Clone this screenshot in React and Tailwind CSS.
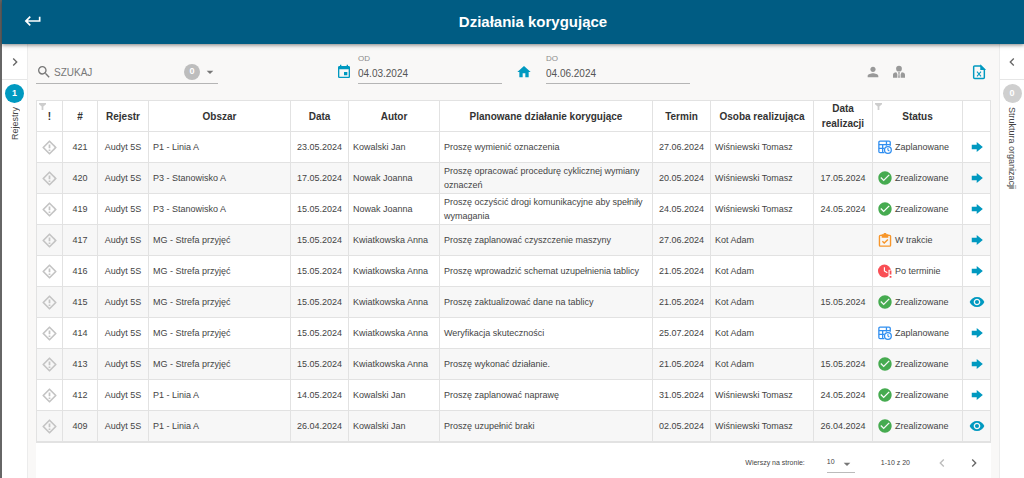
import { useState } from "react";
import {
  MdArrowDropDown,
  MdCheckCircle,
  MdChevronLeft,
  MdChevronRight,
  MdEvent,
  MdHome,
  MdKeyboardReturn,
  MdPerson,
  MdSearch,
  MdVisibility,
} from "react-icons/md";

const PLANNED = "Zaplanowane";
const DONE = "Zrealizowane";
const ACTIVE = "W trakcie";
const LATE = "Po terminie";

const rows = [
  { id: 421, area: "P1 - Linia A", date: "23.05.2024", author: "Kowalski Jan", action: "Proszę wymienić oznaczenia", due: "27.06.2024", person: "Wiśniewski Tomasz", done: "", status: PLANNED },
  { id: 420, area: "P3 - Stanowisko A", date: "17.05.2024", author: "Nowak Joanna", action: "Proszę opracować procedurę cyklicznej wymiany oznaczeń", due: "20.05.2024", person: "Wiśniewski Tomasz", done: "17.05.2024", status: DONE },
  { id: 419, area: "P3 - Stanowisko A", date: "15.05.2024", author: "Nowak Joanna", action: "Proszę oczyścić drogi komunikacyjne aby spełniły wymagania", due: "24.05.2024", person: "Wiśniewski Tomasz", done: "24.05.2024", status: DONE },
  { id: 417, area: "MG - Strefa przyjęć", date: "15.05.2024", author: "Kwiatkowska Anna", action: "Proszę zaplanować czyszczenie maszyny", due: "27.06.2024", person: "Kot Adam", done: "", status: ACTIVE },
  { id: 416, area: "MG - Strefa przyjęć", date: "15.05.2024", author: "Kwiatkowska Anna", action: "Proszę wprowadzić schemat uzupełnienia tablicy", due: "21.05.2024", person: "Kot Adam", done: "", status: LATE },
  { id: 415, area: "MG - Strefa przyjęć", date: "15.05.2024", author: "Kwiatkowska Anna", action: "Proszę zaktualizować dane na tablicy", due: "21.05.2024", person: "Kot Adam", done: "15.05.2024", status: DONE, closed: true },
  { id: 414, area: "MG - Strefa przyjęć", date: "15.05.2024", author: "Kwiatkowska Anna", action: "Weryfikacja skuteczności", due: "25.07.2024", person: "Kot Adam", done: "", status: PLANNED },
  { id: 413, area: "MG - Strefa przyjęć", date: "15.05.2024", author: "Kwiatkowska Anna", action: "Proszę wykonać działanie.", due: "21.05.2024", person: "Kot Adam", done: "15.05.2024", status: DONE },
  { id: 412, area: "P1 - Linia A", date: "14.05.2024", author: "Kowalski Jan", action: "Proszę zaplanować naprawę", due: "31.05.2024", person: "Wiśniewski Tomasz", done: "24.05.2024", status: DONE },
  { id: 409, area: "P1 - Linia A", date: "26.04.2024", author: "Kowalski Jan", action: "Proszę uzupełnić braki", due: "02.05.2024", person: "Wiśniewski Tomasz", done: "26.04.2024", status: DONE, closed: true },
];

const columns = [
  { label: "!", width: "w-[26px]", filter: true },
  { label: "#", width: "w-[35px]" },
  { label: "Rejestr", width: "w-[51px]" },
  { label: "Obszar", width: "w-[142px]" },
  { label: "Data", width: "w-[58px]" },
  { label: "Autor", width: "w-[91px]" },
  { label: "Planowane działanie korygujące", width: "" },
  { label: "Termin", width: "w-[58px]" },
  { label: "Osoba realizująca", width: "w-[103px]" },
  { label: "Data realizacji", width: "w-[59px]" },
  { label: "Status", width: "w-[90px]", filter: true },
  { label: "", width: "w-[28px]" },
];

function PriorityIcon() {
  return (
    <svg viewBox="0 0 24 24" className="mx-auto size-[15px] text-[#c4c4c4]" fill="none" stroke="currentColor" strokeWidth="2.800">
      <path d="M12 2 22 12 12 22 2 12Z" strokeLinejoin="round" />
      <path d="M12 7v6M12 15v2.400" />
    </svg>
  );
}

function FilterIcon() {
  return (
    <svg viewBox="0 0 12 12" className="absolute top-0.5 left-0.5 size-[7px] text-[#cdcdcd]" fill="currentColor">
      <path d="M0 0h12v2L7.500 6v6h-3V6L0 2Z" />
    </svg>
  );
}

function ManagerIcon() {
  return (
    <svg viewBox="0 0 24 24" className="size-4" fill="currentColor">
      <circle cx="12" cy="7" r="4.300" />
      <path d="M3 20.500v-4.500c0-1.800 2-3 5-3.500l1.500 3v5ZM21 20.500v-4.500c0-1.800-2-3-5-3.500l-1.500 3v5ZM10.500 12.500h3L12.700 15l.6 5.500h-2.600l.6-5.500Z" />
    </svg>
  );
}

function ExcelIcon() {
  return (
    <svg viewBox="0 0 24 24" className="size-4" fill="none" stroke="currentColor" strokeWidth="2.200">
      <path d="M14.500 3H5.500C4.500 3 4 3.500 4 4.300v16c0 .9.500 1.500 1.500 1.500h13c1 0 1.500-.6 1.500-1.500V8.500Z" />
      <path d="M15 3v5h5Z" fill="currentColor" />
      <path d="m9 11.500 6 7M15 11.500l-6 7" strokeWidth="1.600" />
    </svg>
  );
}

function ArrowIcon() {
  return (
    <svg viewBox="0 0 24 24" className="size-[14px]" fill="currentColor">
      <path d="M3 8h8.500V3.500l10.500 8.500-10.500 8.500V16H3Z" />
    </svg>
  );
}

function StatusIcon({ status }) {
  if (status === DONE) return <MdCheckCircle className="size-4 shrink-0 text-[#46ab50]" />;
  if (status === PLANNED) {
    return (
      <svg viewBox="0 0 24 24" className="size-[14px] shrink-0 text-[#2f8ef0]" fill="none" stroke="currentColor" strokeWidth="2.200">
        <path d="M11 21.500H3.500a2 2 0 0 1-2-2V4a2 2 0 0 1 2-2H19a2 2 0 0 1 2 2v6" />
        <path d="M1.500 8h19.500M1.500 14.500h9M8 8v13M14.500 2v8" />
        <circle cx="17" cy="17" r="5.800" fill="white" />
        <path d="M17 13.500V17l2.500 2" strokeWidth="1.800" />
      </svg>
    );
  }
  if (status === ACTIVE) {
    return (
      <svg viewBox="0 0 24 24" className="size-[14px] shrink-0 text-[#f7962b]" fill="none" stroke="currentColor" strokeWidth="2.400">
        <rect x="2.500" y="4" width="19" height="18.500" rx="1.500" />
        <path d="M7.500 3.500h9V7h-9Z" fill="currentColor" />
        <circle cx="12" cy="2.500" r="1.500" fill="currentColor" />
        <path d="m7.500 14 3.200 3.200L17 11" />
      </svg>
    );
  }
  return (
    <svg viewBox="0 0 24 24" className="size-[14px] shrink-0" fill="none">
      <circle cx="11" cy="12" r="11" fill="#f94f55" />
      <path d="M11 5.500V12l5 3" stroke="white" strokeWidth="2" />
      <path d="M18 10h6v14h-6Z" fill="white" />
      <path d="M21.500 11v7M21.500 20.500V23.500" stroke="#f94f55" strokeWidth="3" />
    </svg>
  );
}

function SidePanel({ label, count, open, className, badge, turn }) {
  return (
    <aside className={`flex shrink-0 flex-col items-center bg-white ${className}`}>
      <button aria-label={`Rozwiń: ${label}`} className="flex h-9 w-full items-center justify-center border-b border-[#e6e6e6] text-[#666]">
        {open}
      </button>
      <span className={`mt-1 flex size-[19px] items-center justify-center rounded-full text-[9px] font-bold text-white ${badge}`}>{count}</span>
      <span className={`mt-1 text-[9px] leading-3 whitespace-nowrap text-[#444] [writing-mode:vertical-rl] ${turn}`}>{label}</span>
    </aside>
  );
}

function DateField({ id, label, value, onChange }) {
  return (
    <div className="flex w-[144px] flex-col border-b border-[#b5b5b5]">
      <label htmlFor={id} className="text-[8px] leading-[8px] text-[#8b8b8b]">{label}</label>
      <input
        id={id}
        value={value}
        onChange={(e) => onChange(e.target.value)}
        className="h-5 w-full bg-transparent text-[10px] text-[#555] outline-none"
      />
    </div>
  );
}

export default function App() {
  const [search, setSearch] = useState("");
  const [from, setFrom] = useState("04.03.2024");
  const [to, setTo] = useState("04.06.2024");

  return (
    <div className="flex min-h-screen flex-col border-l-2 border-[#666] bg-[#f9f8f7] font-['Liberation_Sans',Arial,sans-serif] text-[#444]">
      <header className="z-10 grid h-11 grid-cols-[62px_1fr_22px] items-center bg-[#005c83] text-white shadow-[0_1px_4px_rgba(0,0,0,0.5)]">
        <button aria-label="Powrót" className="flex size-full items-center justify-center pb-0.5">
          <MdKeyboardReturn className="size-5 stroke-current" />
        </button>
        <h1 className="text-center text-[15px] font-bold">Działania korygujące</h1>
      </header>

      <div className="flex flex-1">
        <SidePanel label="Rejestry" count={1} open={<MdChevronRight className="size-4" />} className="w-[26px] border-r border-[#ececec]" badge="bg-[#0099c0]" turn="rotate-180" />

        <main className="flex min-w-0 flex-1 flex-col px-2">
          <div className="flex h-14 items-end pb-4">
            <div className="flex h-[23px] w-[182px] items-center border-b border-[#b5b5b5]">
              <MdSearch className="size-4 shrink-0 text-[#777]" />
              <input
                aria-label="Szukaj"
                placeholder="SZUKAJ"
                value={search}
                onChange={(e) => setSearch(e.target.value)}
                className="ml-0.5 min-w-0 flex-1 bg-transparent text-[10px] outline-none placeholder:text-[#777]"
              />
              <span className="flex size-4 items-center justify-center rounded-full bg-[#bdbdbd] text-[9px] font-bold text-white">0</span>
              <button aria-label="Opcje wyszukiwania" className="ml-0.5 text-[#777]">
                <MdArrowDropDown className="size-4" />
              </button>
            </div>
            <div className="ml-[118px] flex items-end gap-1.5">
              <MdEvent className="mb-1 size-4 text-[#0099c0]" />
              <DateField id="from" label="OD" value={from} onChange={setFrom} />
            </div>
            <div className="ml-3.5 flex items-end gap-3.5">
              <button aria-label="Bieżący okres" className="mb-1 text-[#0099c0]">
                <MdHome className="size-4" />
              </button>
              <DateField id="to" label="DO" value={to} onChange={setTo} />
            </div>
            <div className="mr-1 mb-1 ml-auto flex items-center text-[#999]">
              <button aria-label="Moje działania" className="mr-2.5">
                <MdPerson className="size-4" />
              </button>
              <button aria-label="Działania przełożonego">
                <ManagerIcon />
              </button>
              <button aria-label="Eksport do Excela" className="ml-16 text-[#0099c0]">
                <ExcelIcon />
              </button>
            </div>
          </div>

          <div className="flex-1 bg-white">
            <table className="w-full table-fixed border-separate border-spacing-0 border-t border-b border-l border-[#e2e2e2] text-[9px] leading-[14px]">
              <thead>
                <tr className="h-[31px]">
                  {columns.map((col, i) => (
                    <th key={i} aria-label={col.label || "Akcje"} className={`relative border-r border-b border-[#e2e2e2] p-0 text-[10px] leading-[15px] font-bold text-[#333] ${col.width}`}>
                      {col.filter && <FilterIcon />}
                      {col.label}
                    </th>
                  ))}
                </tr>
              </thead>
              <tbody className="[&_td]:border-r [&_td]:border-b [&_td]:border-[#e2e2e2] [&_td]:p-0">
                {rows.map((row) => (
                  <tr key={row.id} className="h-[31px] even:bg-[#f7f7f7]">
                    <td><PriorityIcon /></td>
                    <td className="text-center">{row.id}</td>
                    <td className="text-center">Audyt 5S</td>
                    <td><div className="pl-1">{row.area}</div></td>
                    <td className="text-center">{row.date}</td>
                    <td><div className="pl-1">{row.author}</div></td>
                    <td><div className="px-1">{row.action}</div></td>
                    <td className="text-center">{row.due}</td>
                    <td><div className="pl-1">{row.person}</div></td>
                    <td className="text-center">{row.done}</td>
                    <td>
                      <div className="flex items-center gap-0.5 pl-1">
                        <span className="flex w-4 justify-center"><StatusIcon status={row.status} /></span>
                        {row.status}
                      </div>
                    </td>
                    <td>
                      <button aria-label={row.closed ? `Podgląd ${row.id}` : `Przejdź do ${row.id}`} className="flex w-full justify-center text-[#0099c0]">
                        {row.closed ? <MdVisibility className="size-4" /> : <ArrowIcon />}
                      </button>
                    </td>
                  </tr>
                ))}
              </tbody>
            </table>

            <div className="flex h-9 items-center justify-end pt-1 pr-[9px] text-[7px] text-[#444]">
              <label htmlFor="page-size">Wierszy na stronie:</label>
              <div className="relative ml-[22px] border-b border-[#bbb]">
                <select id="page-size" defaultValue="10" className="h-[18px] w-7 appearance-none bg-transparent outline-none">
                  <option>10</option>
                  <option>20</option>
                </select>
                <MdArrowDropDown className="pointer-events-none absolute top-0.5 right-0 size-4 text-[#777]" />
              </div>
              <span className="ml-[26px]">1-10 z 20</span>
              <button aria-label="Poprzednia strona" disabled className="ml-6 text-[#bbb]">
                <MdChevronLeft className="size-4" />
              </button>
              <button aria-label="Następna strona" className="ml-4 text-[#666]">
                <MdChevronRight className="size-4" />
              </button>
            </div>
          </div>
        </main>

        <SidePanel label="Struktura organizacji" count={0} open={<MdChevronLeft className="size-4" />} className="w-[25px] border-l border-[#ececec]" badge="bg-[#cfcfcf]" turn="" />
      </div>
    </div>
  );
}
